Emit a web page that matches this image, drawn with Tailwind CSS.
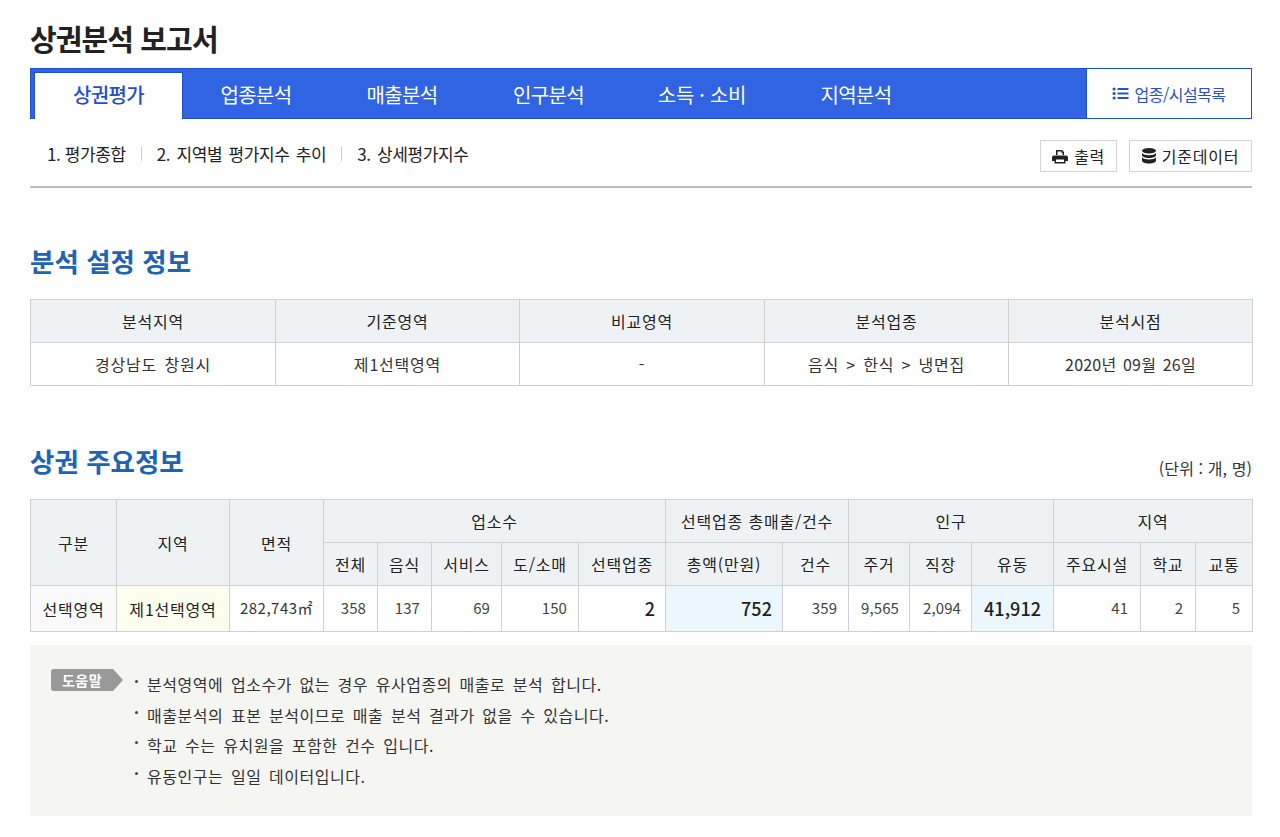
<!DOCTYPE html>
<html lang="ko">
<head>
  <meta charset="UTF-8" />
  <title>상권분석 보고서</title>
  <script src="https://cdn.jsdelivr.net/npm/@tailwindcss/browser@4"></script>
</head>
<body class="bg-white text-[#222] font-['Noto_Sans_CJK_KR','Noto_Sans',sans-serif] overflow-hidden">
<div class="w-[1222px] ml-[30px] h-[837px]">

  <h1 class="h-[68px] pt-[15px] text-[29px] leading-[46px] font-bold tracking-[-0.9px] text-[#222]">상권분석 보고서</h1>

  <!-- tabs -->
  <nav class="h-[51px] flex bg-[#3164e3] border border-[#1f50d0] pl-[3px] pt-[3px]">
    <a class="w-[149px] h-[47px] bg-white border-t border-x border-[#1f50d0] -mb-px text-[#1f4fd0] text-[20px] font-medium pb-[2px] flex items-center justify-center tracking-[-0.6px]">상권평가</a>
    <a class="w-[146px] h-[47px] text-white text-[20px] pb-[2px] flex items-center justify-center tracking-[-0.6px]">업종분석</a>
    <a class="w-[146px] h-[47px] text-white text-[20px] pb-[2px] flex items-center justify-center tracking-[-0.6px]">매출분석</a>
    <a class="w-[147px] h-[47px] text-white text-[20px] pb-[2px] flex items-center justify-center tracking-[-0.6px]">인구분석</a>
    <a class="w-[160px] h-[47px] text-white text-[20px] pb-[2px] flex items-center justify-center tracking-[-0.3px]">소득 · 소비</a>
    <a class="w-[148px] h-[47px] text-white text-[20px] pb-[2px] flex items-center justify-center tracking-[-0.6px]">지역분석</a>
    <a class="ml-auto -mt-[3px] w-[165px] h-[49px] bg-white border-l-[1px] border-[#1f50d0] flex items-center justify-center gap-[5px] text-[#2a50c8] text-[16px] tracking-[-0.5px]">
      <svg width="17" height="13" viewBox="0 0 16 13" fill="#2a50c8"><circle cx="1.6" cy="2" r="1.6"/><circle cx="1.6" cy="6.5" r="1.6"/><circle cx="1.6" cy="11" r="1.6"/><rect x="5" y="1" width="11" height="2"/><rect x="5" y="5.5" width="11" height="2"/><rect x="5" y="10" width="11" height="2"/></svg>
      업종/시설목록
    </a>
  </nav>

  <!-- sub menu -->
  <div class="h-[69px] flex items-center border-b-2 border-[#bbb] pt-[3px]">
    <ul class="flex items-center pl-[17px] text-[17px] tracking-[-0.4px] [word-spacing:2px] text-[#222]">
      <li class="[word-spacing:0px]">1. 평가종합</li>
      <li class="w-px h-[14px] bg-[#ccc] mx-[15px]"></li>
      <li>2. 지역별 평가지수 추이</li>
      <li class="w-px h-[14px] bg-[#ccc] mx-[15px]"></li>
      <li>3. 상세평가지수</li>
    </ul>
    <div class="ml-auto flex gap-[12px] mt-[4px]">
      <button class="w-[77px] h-[32px] border border-[#d4d4d4] flex items-center justify-center gap-[6px] text-[16px] text-[#222] tracking-[0.5px]">
        <svg width="16" height="15" viewBox="0 0 16 15" fill="#222"><path d="M4 1h6l2 2v3h-1.500V4H9.500V2.500h-4V6H4zM2 6.500h12a2 2 0 0 1 2 2V12h-2.500v2.500h-11V12H0V8.500a2 2 0 0 1 2-2zM4 10.500v2.500h8v-2.500z"/></svg>
        출력
      </button>
      <button class="w-[123px] h-[32px] border border-[#d4d4d4] flex items-center justify-center gap-[6px] text-[16px] text-[#222] tracking-[0.8px]">
        <svg width="14" height="16" viewBox="0 0 14 16" fill="#222"><ellipse cx="7" cy="2.800" rx="7" ry="2.800"/><path d="M0 5c1 1.600 4 2.200 7 2.200S13 6.600 14 5v2.300c0 1.500-3 2.700-7 2.700S0 8.800 0 7.300zM0 9.200c1 1.600 4 2.200 7 2.200s6-.6 7-2.200v3.400c0 1.700-3 3-7 3s-7-1.300-7-3z"/></svg>
        기준데이터
      </button>
    </div>
  </div>

  <!-- 분석 설정 정보 -->
  <h2 class="mt-[55px] h-[56px] text-[26.5px] leading-[36px] font-bold text-[#1f63b5]">분석 설정 정보</h2>
  <table class="w-full table-fixed border-collapse text-[16px] tracking-[0.8px] text-center">
    <colgroup>
      <col class="w-[245px]" /><col class="w-[244px]" /><col class="w-[245px]" /><col class="w-[244px]" /><col class="w-[244px]" />
    </colgroup>
    <tbody>
      <tr class="h-[43px] bg-[#eff2f5] font-normal">
        <th class="border border-[#cfd1d3] font-normal">분석지역</th>
        <th class="border border-[#cfd1d3] font-normal">기준영역</th>
        <th class="border border-[#cfd1d3] font-normal">비교영역</th>
        <th class="border border-[#cfd1d3] font-normal">분석업종</th>
        <th class="border border-[#cfd1d3] font-normal">분석시점</th>
      </tr>
      <tr class="h-[43px] text-[#333] [word-spacing:2px]">
        <td class="border border-[#cfd1d3]">경상남도 창원시</td>
        <td class="border border-[#cfd1d3]">제1선택영역</td>
        <td class="border border-[#cfd1d3]">-</td>
        <td class="border border-[#cfd1d3]">음식 &gt; 한식 &gt; 냉면집</td>
        <td class="border border-[#cfd1d3] tracking-[0.2px]">2020년 09월 26일</td>
      </tr>
    </tbody>
  </table>

  <!-- 상권 주요정보 -->
  <div class="mt-[53px] h-[60px] flex justify-between">
    <h2 class="text-[26.5px] leading-[44px] font-bold text-[#1f63b5]">상권 주요정보</h2>
    <span class="text-[16px] text-[#333] mt-[19px] leading-[20px] tracking-[0.1px]">(단위 : 개, 명)</span>
  </div>
  <table class="w-full table-fixed border-collapse text-[16px] tracking-[0.8px] text-center">
    <colgroup>
      <col class="w-[86px]" /><col class="w-[113px]" /><col class="w-[94px]" /><col class="w-[54px]" /><col class="w-[54px]" /><col class="w-[70px]" /><col class="w-[77px]" /><col class="w-[87px]" /><col class="w-[117px]" /><col class="w-[66px]" /><col class="w-[61px]" /><col class="w-[62px]" /><col class="w-[82px]" /><col class="w-[87px]" /><col class="w-[55px]" /><col class="w-[57px]" />
    </colgroup>
    <thead class="bg-[#eff2f5]">
      <tr class="h-[43px]">
        <th rowspan="2" class="border border-[#cfd1d3] font-normal">구분</th>
        <th rowspan="2" class="border border-[#cfd1d3] font-normal">지역</th>
        <th rowspan="2" class="border border-[#cfd1d3] font-normal">면적</th>
        <th colspan="5" class="border border-[#cfd1d3] font-normal">업소수</th>
        <th colspan="2" class="border border-[#cfd1d3] font-normal">선택업종 총매출/건수</th>
        <th colspan="3" class="border border-[#cfd1d3] font-normal">인구</th>
        <th colspan="3" class="border border-[#cfd1d3] font-normal">지역</th>
      </tr>
      <tr class="h-[43px]">
        <th class="border border-[#cfd1d3] font-normal">전체</th>
        <th class="border border-[#cfd1d3] font-normal">음식</th>
        <th class="border border-[#cfd1d3] font-normal">서비스</th>
        <th class="border border-[#cfd1d3] font-normal">도/소매</th>
        <th class="border border-[#cfd1d3] font-normal">선택업종</th>
        <th class="border border-[#cfd1d3] font-normal">총액(만원)</th>
        <th class="border border-[#cfd1d3] font-normal">건수</th>
        <th class="border border-[#cfd1d3] font-normal">주거</th>
        <th class="border border-[#cfd1d3] font-normal">직장</th>
        <th class="border border-[#cfd1d3] font-normal">유동</th>
        <th class="border border-[#cfd1d3] font-normal">주요시설</th>
        <th class="border border-[#cfd1d3] font-normal">학교</th>
        <th class="border border-[#cfd1d3] font-normal">교통</th>
      </tr>
    </thead>
    <tbody class="text-[15px] tracking-[0.1px] text-[#444]">
      <tr class="h-[46px]">
        <td class="border border-[#cfd1d3] bg-[#f9f9f9] text-[16px] tracking-[0.8px] text-[#222]">선택영역</td>
        <td class="border border-[#cfd1d3] bg-[#fefeee] text-[16px] tracking-[0.8px] text-[#222]">제1선택영역</td>
        <td class="border border-[#cfd1d3] text-[#333] tracking-[0.5px]">282,743㎡</td>
        <td class="border border-[#cfd1d3] text-right pr-[11px]">358</td>
        <td class="border border-[#cfd1d3] text-right pr-[11px]">137</td>
        <td class="border border-[#cfd1d3] text-right pr-[11px]">69</td>
        <td class="border border-[#cfd1d3] text-right pr-[11px]">150</td>
        <td class="border border-[#cfd1d3] text-right pr-[10px] text-[18px] font-medium text-[#222]">2</td>
        <td class="border border-[#cfd1d3] bg-[#ebf6fd] text-right pr-[10px] text-[18px] font-medium text-[#222]">752</td>
        <td class="border border-[#cfd1d3] text-right pr-[11px]">359</td>
        <td class="border border-[#cfd1d3] text-right pr-[10px]">9,565</td>
        <td class="border border-[#cfd1d3] text-right pr-[10px]">2,094</td>
        <td class="border border-[#cfd1d3] bg-[#ebf6fd] text-center text-[18px] font-medium text-[#222]">41,912</td>
        <td class="border border-[#cfd1d3] text-right pr-[12px]">41</td>
        <td class="border border-[#cfd1d3] text-right pr-[12px]">2</td>
        <td class="border border-[#cfd1d3] text-right pr-[12px]">5</td>
      </tr>
    </tbody>
  </table>

  <!-- 도움말 -->
  <div class="mt-[13px] h-[171px] bg-[#f5f5f1] flex pl-[21px] pt-[24px]">
    <div class="relative w-[62px] h-[22px] bg-[#999] rounded-l-[3px] text-white text-[14px] font-bold flex items-center justify-center tracking-[0.5px]">
      도움말
      <span class="absolute left-full top-0 border-y-[11px] border-y-transparent border-l-[10px] border-l-[#999]"></span>
    </div>
    <ul class="ml-[22px] text-[16px] text-[#333] leading-[30.6px] tracking-[0.55px] [word-spacing:2.5px]">
      <li class="relative pl-[12px] before:content-[''] before:absolute before:left-0 before:top-[11px] before:w-[3px] before:h-[3px] before:rounded-full before:bg-[#444]">분석영역에 업소수가 없는 경우 유사업종의 매출로 분석 합니다.</li>
      <li class="relative pl-[12px] before:content-[''] before:absolute before:left-0 before:top-[11px] before:w-[3px] before:h-[3px] before:rounded-full before:bg-[#444]">매출분석의 표본 분석이므로 매출 분석 결과가 없을 수 있습니다.</li>
      <li class="relative pl-[12px] before:content-[''] before:absolute before:left-0 before:top-[11px] before:w-[3px] before:h-[3px] before:rounded-full before:bg-[#444]">학교 수는 유치원을 포함한 건수 입니다.</li>
      <li class="relative pl-[12px] before:content-[''] before:absolute before:left-0 before:top-[11px] before:w-[3px] before:h-[3px] before:rounded-full before:bg-[#444]">유동인구는 일일 데이터입니다.</li>
    </ul>
  </div>
</div>
</body>
</html>
